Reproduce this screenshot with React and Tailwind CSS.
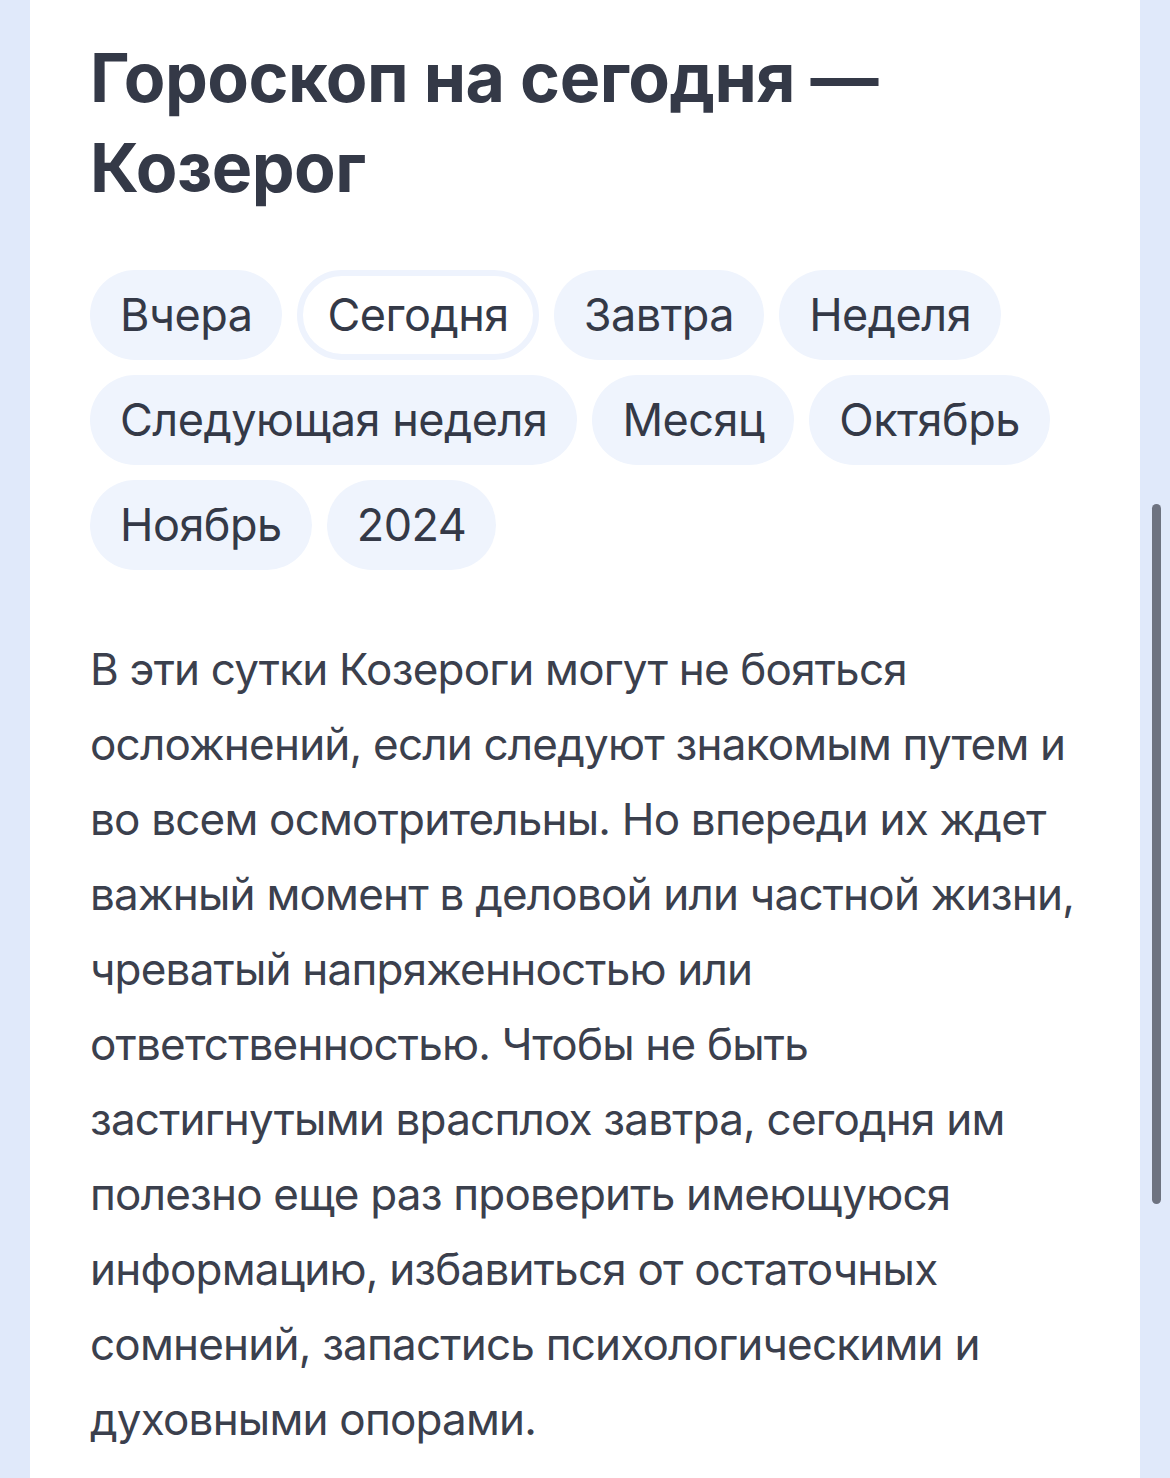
import React from 'react';

const PERIODS = [
  'Вчера',
  'Сегодня',
  'Завтра',
  'Неделя',
  'Следующая неделя',
  'Месяц',
  'Октябрь',
  'Ноябрь',
  '2024',
];

const ACTIVE = 'Сегодня';

const TEXT =
  'В эти сутки Козероги могут не бояться осложнений, если следуют знакомым путем и во всем осмотрительны. Но впереди их ждет важный момент в деловой или частной жизни, чреватый напряженностью или ответственностью. Чтобы не быть застигнутыми врасплох завтра, сегодня им полезно еще раз проверить имеющуюся информацию, избавиться от остаточных сомнений, запастись психологическими и духовными опорами.';

export default function App() {
  return (
    <div
      className="relative min-h-[1478px] bg-[#e0e9fa] px-[30px]"
      style={{ fontFamily: 'Inter, "Noto Sans", sans-serif' }}
    >
      {/* Card */}
      <div className="bg-white min-h-[1478px] px-[60px] pt-[32px] pb-[40px]">
        <h1 className="text-[68px] leading-[90px] font-bold text-[#343947] tracking-[-0.5px]">
          Гороскоп на сегодня — Козерог
        </h1>

        {/* Period tabs */}
        <div className="mt-[58px] flex flex-wrap gap-[15px]">
          {PERIODS.map((p) =>
            p === ACTIVE ? (
              <span
                key={p}
                className="h-[90px] px-[24px] rounded-full border-[6px] border-[#eef3fd] bg-white flex items-center text-[45px] text-[#343947] tracking-[-0.5px]"
              >
                {p}
              </span>
            ) : (
              <span
                key={p}
                className="h-[90px] px-[30px] rounded-full bg-[#eff4fd] flex items-center text-[45px] text-[#343947] tracking-[-0.5px]"
              >
                {p}
              </span>
            )
          )}
        </div>

        {/* Description */}
        <p className="mt-[62px] text-[44px] leading-[75px] text-[#3b404d] tracking-[-0.8px]">
          {TEXT}
        </p>
      </div>

      {/* Scrollbar thumb */}
      <div className="absolute right-[9px] top-[504px] w-[9px] h-[700px] rounded-full bg-[#6e7380]" />
    </div>
  );
}
